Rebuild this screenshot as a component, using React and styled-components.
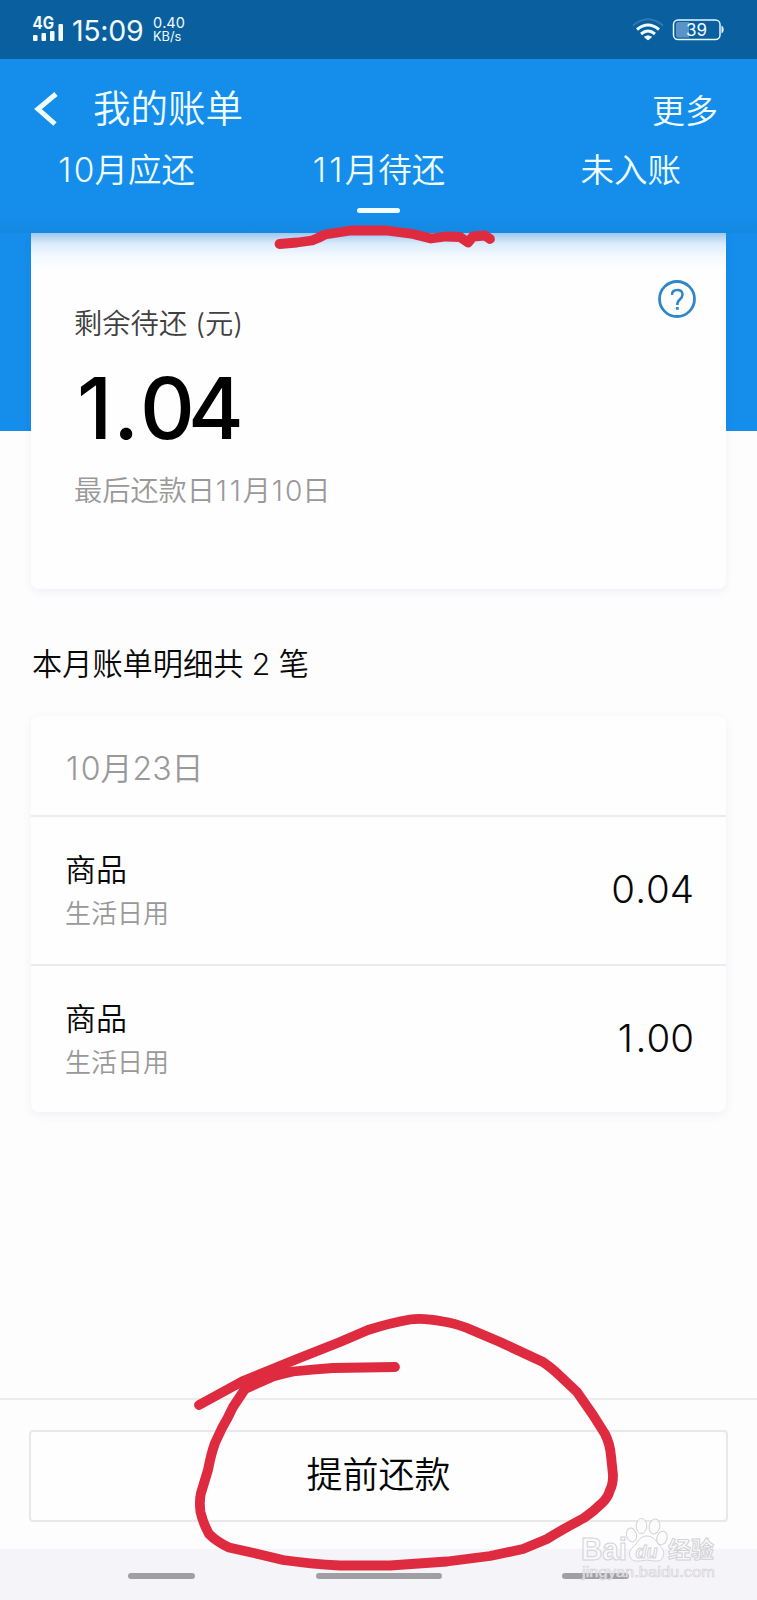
import React from "react";
import styled, { createGlobalStyle } from "styled-components";

const GlobalStyle = createGlobalStyle`
  * { box-sizing: border-box; }
  body { margin: 0; background: #fdfdfe; }
`;

const Page = styled.div`
  position: relative;
  width: 757px;
  height: 1600px;
  overflow: hidden;
  display: flex;
  flex-direction: column;
  background: #fdfdfe;
  color: #080808;
  font-family: Inter, "Noto Sans CJK SC", sans-serif;
  font-weight: 340;
  font-kerning: none;
`;

const Text = styled.span`
  display: block;
  white-space: nowrap;
  font-size: ${(p) => p.$size}px;
  line-height: ${(p) => p.$line}px;
  letter-spacing: ${(p) => p.$track || 0}px;
  color: ${(p) => p.$color || "inherit"};
  font-weight: ${(p) => p.$weight || "inherit"};
`;

const NarrowDigit = styled.span`
  margin: 0 0.07em 0 0.03em;
`;

const AmountPart = styled.span`
  letter-spacing: ${(p) => p.$track}px;
`;

const StatusBar = styled.div`
  height: 59px;
  flex: none;
  display: flex;
  justify-content: space-between;
  padding: 16px 33px 0 32px;
  background: #0a609f;
  color: #f3fbff;
`;

const StatusGroup = styled.div`
  display: flex;
  align-items: flex-start;
  gap: ${(p) => p.$gap}px;
`;

const Signal = styled.div`
  width: 31px;
  height: 26px;

  svg { display: block; overflow: visible; }
`;

const Clock = styled(Text)`
  width: 72px;
`;

const Header = styled.header`
  position: relative;
  z-index: 1;
  height: 174px;
  flex: none;
  background: linear-gradient(#148deb 155px, #1589e2 174px);
  color: #f0fdff;

  &::after {
    content: "";
    position: absolute;
    left: 31px;
    right: 31px;
    top: 174px;
    height: 38px;
    background: linear-gradient(rgba(66, 143, 220, 0.5), rgba(110, 180, 245, 0.24) 11px, rgba(140, 200, 255, 0.08) 24px, transparent);
  }
`;

const TitleRow = styled.div`
  display: flex;
  align-items: center;
  height: 80px;
  padding: 20px 39px 0 34px;

  svg { margin-right: 35px; }
`;

const MoreLink = styled(Text)`
  margin-left: auto;
  padding-top: 3px;
`;

const Tabs = styled.nav`
  display: grid;
  grid-template-columns: repeat(3, 1fr);
`;

const Tab = styled.div`
  display: flex;
  flex-direction: column;
  align-items: center;
  padding-top: 7px;
`;

const TabMarker = styled.i`
  width: 43px;
  height: 5px;
  margin-top: 14px;
  border-radius: 3px;
  background: #f2fdff;
`;

const Hero = styled.section`
  flex: none;
  padding: 0 31px;
  background: linear-gradient(#148deb 198px, transparent 198px);
`;

const SummaryCard = styled.div`
  display: flex;
  justify-content: space-between;
  align-items: flex-start;
  height: 356px;
  padding: 47px 30px 0 43px;
  background: #fefefe;
  border-radius: 0 0 8px 8px;
  box-shadow: 0 3px 8px rgba(80, 50, 110, 0.07);
`;

const Summary = styled.div`
  display: flex;
  flex-direction: column;
  padding-top: 1px;
`;

const BalanceAmount = styled(Text)`
  padding-left: 3px;
`;

const SectionTitle = styled.h2`
  flex: none;
  margin: 54px 0 0 32px;
  height: 41px;
  font-weight: inherit;
`;

const BillCard = styled.section`
  flex: none;
  height: 396px;
  margin: 32px 31px 0;
  background: #fefefe;
  border-radius: 8px;
  box-shadow: 0 3px 10px rgba(80, 50, 110, 0.07);
`;

const BillDate = styled.div`
  height: 99px;
  padding: 32px 34px 0;
`;

const BillRow = styled.div`
  display: flex;
  justify-content: space-between;
  height: 149px;
  padding: 33px 32px 0 34px;
  border-top: 2px solid #ececee;
`;

const BillAmount = styled(Text)`
  padding-top: 17px;
`;

const Footer = styled.footer`
  flex: none;
  height: 151px;
  margin-top: auto;
  padding: 30px 29px 0;
  border-top: 2px solid #ececee;
`;

const RepayButton = styled.button`
  display: flex;
  justify-content: center;
  align-items: center;
  width: 100%;
  height: 92px;
  padding: 0 0 2px;
  border: 2px solid #e8e8ea;
  border-radius: 4px;
  background: #fefefe;
  color: #050505;
  font: inherit;
`;

const NavBar = styled.div`
  flex: none;
  height: 51px;
  display: flex;
  justify-content: space-between;
  padding: 24px 128px 0;
  background: #f5f4f8;
`;

const NavPill = styled.i`
  width: ${(p) => p.$width}px;
  height: 6px;
  border-radius: 3px;
  background: #a09fa2;
`;

const Overlay = styled.svg`
  position: absolute;
  inset: 0;
  z-index: 2;
  pointer-events: none;
`;

const bills = [
  { name: "商品", kind: "生活日用", amount: "0.04" },
  { name: "商品", kind: "生活日用", amount: "1.00" },
];

const tabs = [
  { label: "10月应还" },
  { label: "11月待还", active: true },
  { label: "未入账" },
];

// Gives each "1" some side space so that it sits evenly beside wider digits.
function Spaced({ text }) {
  return text
    .split(/(1)/)
    .filter(Boolean)
    .map((part, i) => (part === "1" ? <NarrowDigit key={i}>1</NarrowDigit> : part));
}

function SignalIcon() {
  return (
    <Signal>
      <svg width="31" height="26" viewBox="0 0 31 26" fill="#f3fbff">
        <text x="0.5" y="12.500" fontSize="17" fontWeight="650" textLength="21.500" lengthAdjust="spacingAndGlyphs">4G</text>
        <rect x="1" y="19" width="4.500" height="6" rx="1" />
        <rect x="9.5" y="17" width="4.500" height="8" rx="1" />
        <rect x="18" y="15" width="4.500" height="10" rx="1" />
        <rect x="26.5" y="8" width="4.500" height="17" rx="1" />
      </svg>
    </Signal>
  );
}

function WifiIcon() {
  return (
    <svg width="32" height="26" viewBox="0 0 32 26" fill="none" strokeWidth="3">
      <path d="M1 9.500Q16 -3 31 9.500" stroke="#3479b1" strokeWidth="2" />
      <path d="M5 13.500Q16 4.500 27 13.500" stroke="#f3fbff" />
      <path d="M9 18Q16 12 23 18" stroke="#f3fbff" />
      <path d="M12.500 21Q16 18.500 19.500 21L16 24Z" fill="#f3fbff" stroke="#f3fbff" strokeWidth="1" />
    </svg>
  );
}

function BatteryIcon() {
  return (
    <svg width="52" height="26" viewBox="0 0 52 26">
      <rect x="1.500" y="4" width="46.500" height="19.500" rx="4.500" fill="none" stroke="#e4f6ff" strokeWidth="1.500" />
      <path d="M6 6H17V21.500H6Q4 21.500 4 19.500V8Q4 6 6 6Z" fill="#5a93c6" />
      <path d="M49.500 9.500Q51.700 10.500 51.700 13.500T49.500 17.500Z" fill="#e4f6ff" />
      <text x="24.500" y="19.500" fontSize="17" fontWeight="400" textAnchor="middle" fill="#f3fbff" textLength="21" lengthAdjust="spacingAndGlyphs">39</text>
    </svg>
  );
}

function Annotations() {
  return (
    <g fill="none" stroke="#df2b40" strokeWidth="9.800" strokeLinecap="round" strokeLinejoin="round">
      <path d="M279.500 244L297 242.500L312 240.500L318 238L325 234.500L338 232.500L351 230.500H386L413 234L431 238.500L446 236.500L460 237L468 242.500L473 236.500L485 235.500L490 239" />
      <path d="M199 1405L243 1381L297 1359L340 1342L368 1330Q390 1323 410 1319.500Q423 1317.500 443 1321.500Q454 1323 467 1328L500 1342L543 1362Q553 1369 559 1375L577 1392L593 1415L605 1434Q610 1444 611 1456L613 1475Q613 1485 610 1490Q608 1498 601 1504Q594 1511 584 1518Q563 1529 547 1539L523 1549L490 1556L447 1561.500L390 1565.500H340Q310 1564 283 1560L260 1554.500L229 1547.500Q217 1542 209 1534Q203 1523 200.500 1512Q199 1501 201 1493L208 1470Q211 1454 215 1443L222 1428Q228 1418 233 1407L245 1389L273 1376.500Q282 1374 293 1371.500Q312 1369.500 333 1368L395 1367" />
    </g>
  );
}

function Watermark() {
  return (
    <g fill="#fbfbfc" fillOpacity="0.8" stroke="#d3d2d6" strokeWidth="1" fontWeight="700">
      <text x="581" y="1560" fontSize="31" fontFamily="Liberation Sans, sans-serif" textLength="46" lengthAdjust="spacingAndGlyphs">Bai</text>
      <ellipse cx="631.500" cy="1535" rx="5" ry="7" transform="rotate(-15 631.500 1535)" />
      <ellipse cx="641.500" cy="1526" rx="5.300" ry="7.500" />
      <ellipse cx="654.500" cy="1526.500" rx="5.300" ry="7.500" transform="rotate(10 654.500 1526.500)" />
      <ellipse cx="662" cy="1538" rx="5" ry="7" transform="rotate(20 662 1538)" />
      <path d="M647 1536C652 1536 656 1540 659 1545C663 1549 665 1552 663 1557C660 1563 655 1561 647 1560C639 1561 633 1563 630 1557C628 1551 632 1548 636 1544C639 1539 642 1536 647 1536Z" />
      <text x="635.500" y="1558" fontSize="19" fontFamily="Liberation Sans, sans-serif" fontStyle="italic" textLength="22" lengthAdjust="spacingAndGlyphs">du</text>
      <text x="668" y="1558" fontSize="23" textLength="46" lengthAdjust="spacingAndGlyphs">经验</text>
      <text x="582" y="1577" fontSize="14" fontWeight="400" fontFamily="Liberation Sans, sans-serif" strokeWidth="0.600" textLength="133" lengthAdjust="spacingAndGlyphs">jingyan.baidu.com</text>
    </g>
  );
}

export default function App() {
  return (
    <Page>
      <GlobalStyle />
      <StatusBar>
        <StatusGroup $gap={9}>
          <SignalIcon />
          <Clock $size={28.5} $line={30} $weight={400} $track={-0.3}>15:09</Clock>
          <div>
            <Text $size={14.5} $line={14} $weight={400}>0.40</Text>
            <Text $size={12.8} $line={14} $weight={400}>KB/s</Text>
          </div>
        </StatusGroup>
        <StatusGroup $gap={8}>
          <WifiIcon />
          <BatteryIcon />
        </StatusGroup>
      </StatusBar>

      <Header>
        <TitleRow>
          <svg width="24" height="34" viewBox="0 0 24 34">
            <path d="M22 2L4 17L21 32" fill="none" stroke="#f0fdff" strokeWidth="5" />
          </svg>
          <Text $size={37.5} $line={50}>我的账单</Text>
          <MoreLink $size={33} $line={46}>更多</MoreLink>
        </TitleRow>
        <Tabs>
          {tabs.map((tab) => (
            <Tab key={tab.label}>
              <Text $size={33.5} $line={48}><Spaced text={tab.label} /></Text>
              {tab.active && <TabMarker />}
            </Tab>
          ))}
        </Tabs>
      </Header>

      <Hero>
        <SummaryCard>
          <Summary>
            <Text $size={28.3} $line={86} $color="#404040">剩余待还 (元)</Text>
            <BalanceAmount $size={85} $line={84} $weight={540} $color="#000">
              <AmountPart $track={1}>1.</AmountPart>
              <AmountPart $track={-7}>04</AmountPart>
            </BalanceAmount>
            <Text $size={28.2} $line={80} $color="#999"><Spaced text="最后还款日11月10日" /></Text>
          </Summary>
          <svg width="38" height="38" viewBox="0 0 38 38" fill="none" stroke="#2f86c8">
            <circle cx="19" cy="19" r="17.500" strokeWidth="2.800" />
            <path d="M14 15Q14 10 19.300 10Q24.500 10 24.500 14.500Q24.500 17 21.800 19.500Q19.300 21.500 19.300 25" strokeWidth="2.500" />
            <path d="M19.300 27V29.800" strokeWidth="2.800" />
          </svg>
        </SummaryCard>
      </Hero>

      <SectionTitle>
        <Text $size={30.2} $line={42}>本月账单明细共 2 笔</Text>
      </SectionTitle>

      <BillCard>
        <BillDate>
          <Text $size={32} $line={42} $color="#999"><Spaced text="10月23日" /></Text>
        </BillDate>
        {bills.map((bill, i) => (
          <BillRow key={i}>
            <div>
              <Text $size={31} $line={40}>{bill.name}</Text>
              <Text $size={26} $line={48} $color="#999">{bill.kind}</Text>
            </div>
            <BillAmount $size={38.5} $line={44}><Spaced text={bill.amount} /></BillAmount>
          </BillRow>
        ))}
      </BillCard>

      <Footer>
        <RepayButton>
          <Text $size={36} $line={48}>提前还款</Text>
        </RepayButton>
      </Footer>
      <NavBar>
        <NavPill $width={67} />
        <NavPill $width={126} />
        <NavPill $width={67} />
      </NavBar>

      <Overlay width="757" height="1600" viewBox="0 0 757 1600">
        <Annotations />
        <Watermark />
      </Overlay>
    </Page>
  );
}
